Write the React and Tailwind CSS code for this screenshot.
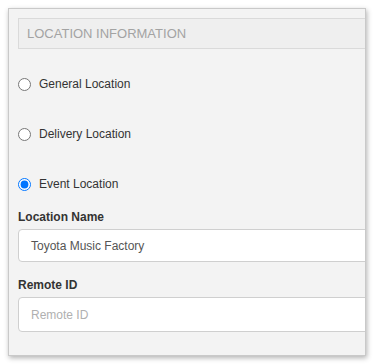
const App = () => {
  const options = ['General Location', 'Delivery Location', 'Event Location'];

  return (
    <div className="w-[374px] h-[364px] bg-white pt-2 pl-2" style={{ fontFamily: '"Liberation Sans", Arial, sans-serif' }}>
      <div className="w-[358px] h-[348px] border border-[#c9c9c9] bg-[#f3f3f3] overflow-hidden shadow-[1px_2px_5px_rgba(0,0,0,0.3)] pt-[9px] pl-[9px]">
        {/* Section header */}
        <div className="w-[380px] h-[31px] border border-[#dadada] bg-[#efefef] flex items-center pl-2">
          <span className="text-[13px] text-[#a3a3a3] uppercase">Location Information</span>
        </div>

        {/* Location type */}
        <div className="mt-[10px] flex flex-col">
          {options.map((opt, i) => (
            <label key={opt} className="h-[50px] flex items-center gap-[8px]">
              <input
                type="radio"
                name="locationType"
                defaultChecked={i === 2}
                className="w-[13px] h-[13px] m-0"
              />
              <span className="text-[12px] text-[#333]">{opt}</span>
            </label>
          ))}
        </div>

        {/* Location name */}
        <div className="text-[12px] font-bold text-[#333] leading-4">Location Name</div>
        <div className="mt-[4px] w-[380px] h-[33px] bg-white border border-[#cfcfcf] rounded-[4px] flex items-center pl-3 text-[12px] text-[#555]">
          Toyota Music Factory
        </div>

        {/* Remote ID */}
        <div className="mt-[15px] text-[12px] font-bold text-[#333] leading-4">Remote ID</div>
        <input
          type="text"
          placeholder="Remote ID"
          className="mt-[4px] block w-[380px] h-[35px] bg-white border border-[#cfcfcf] rounded-[4px] pl-3 text-[12px] text-[#555] placeholder:text-[#b0b0b0] outline-none"
        />
      </div>
    </div>
  );
};

export default App;
